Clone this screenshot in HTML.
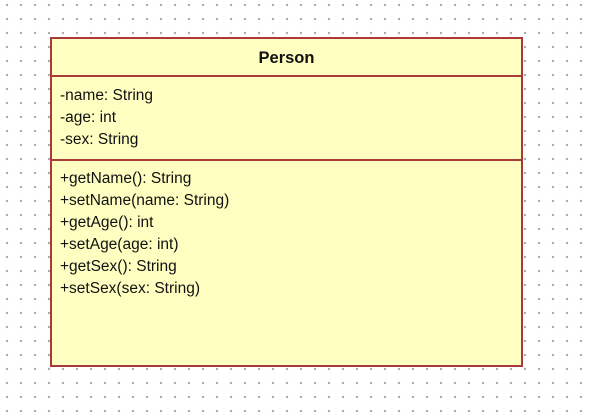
<!DOCTYPE html>
<html><head><style>
body{margin:0;width:592px;height:414px;overflow:hidden;background:#fff;
background-image:radial-gradient(circle,#aaa 1px,transparent 1.4px);
background-size:14px 14px;background-position:0px -2px;}
.box{position:absolute;left:50px;top:37px;width:469px;height:326px;border:2px solid #a83a3a;background:#ffffc2;
font-family:"Liberation Sans","DejaVu Sans",sans-serif;font-size:15.5px;color:#111;}
.hdr{height:36px;border-bottom:2px solid #a83a3a;text-align:center;font-weight:bold;line-height:38px;font-size:16.5px}
.attr{height:82px;border-bottom:2px solid #a83a3a;padding:0 0 0 8px;}
.meth{padding:0 0 0 8px;}
.l{height:22px;line-height:22px}
</style></head><body>
<div class="box">
<div class="hdr">Person</div>
<div class="attr"><div style="height:8px"></div>
<div class="l">-name: String</div><div class="l">-age: int</div><div class="l">-sex: String</div></div>
<div class="meth"><div style="height:7px"></div>
<div class="l">+getName(): String</div><div class="l">+setName(name: String)</div><div class="l">+getAge(): int</div><div class="l">+setAge(age: int)</div><div class="l">+getSex(): String</div><div class="l">+setSex(sex: String)</div></div>
</div>
</body></html>
